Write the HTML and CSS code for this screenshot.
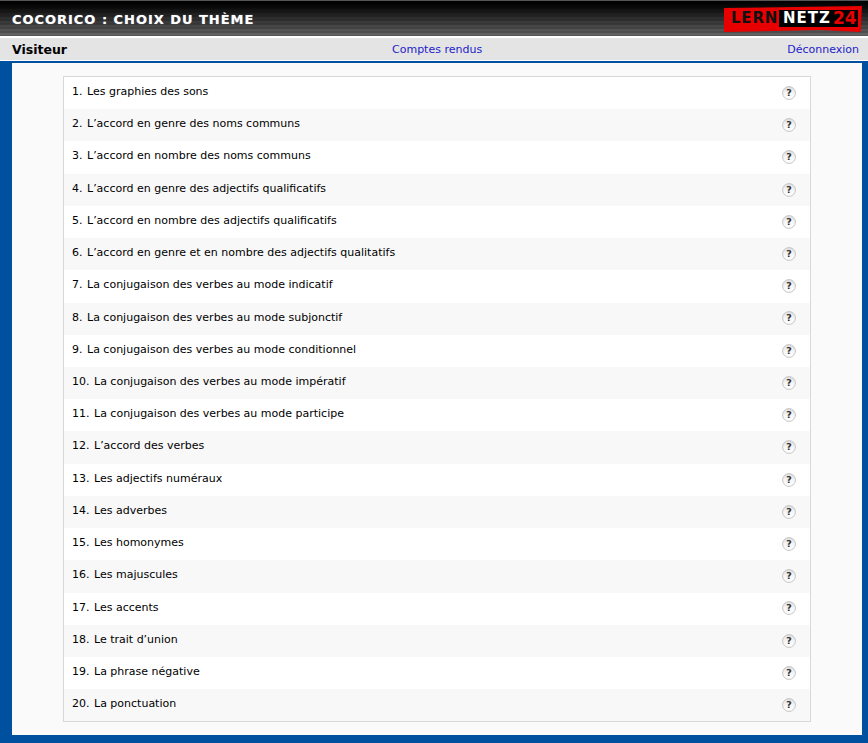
FILE: index.html
```html
<!DOCTYPE html>
<html lang="fr">
<head>
<meta charset="utf-8">
<title>Cocorico : choix du thème</title>
<link rel="stylesheet" href="styles.css">
</head>
<body>
<svg class="defs" width="0" height="0" aria-hidden="true">
  <defs>
    <linearGradient id="qbg" x1="0" y1="0" x2="0" y2="1">
      <stop offset="0" stop-color="#dcdcdc"/>
      <stop offset="0.5" stop-color="#f6f6f6"/>
      <stop offset="1" stop-color="#ffffff"/>
    </linearGradient>
    <symbol id="help" viewBox="0 0 14 14">
      <circle cx="7" cy="7" r="6.4" fill="url(#qbg)" stroke="#c4c4c4" stroke-width="1"/>
      <text x="7" y="10.4" text-anchor="middle" class="qmark">?</text>
    </symbol>
  </defs>
</svg>
<header class="topbar">
  <h1 class="title">COCORICO : CHOIX DU THÈME</h1>
  <div class="logo">
    <span class="logo-lern">LERN</span>
    <div class="logo-box"><span class="logo-netz">NETZ</span><span class="logo-num">24</span></div>
  </div>
</header>
<nav class="menubar">
  <strong class="user">Visiteur</strong>
  <a class="link" href="#">Comptes rendus</a>
  <a class="link link-right" href="#">Déconnexion</a>
</nav>
<main class="content">
  <ul class="themes">
    <li class="theme"><span><span class="num">1.</span> Les graphies des sons</span><svg class="help"><use href="#help"/></svg></li>
    <li class="theme"><span><span class="num">2.</span> L’accord en genre des noms communs</span><svg class="help"><use href="#help"/></svg></li>
    <li class="theme"><span><span class="num">3.</span> L’accord en nombre des noms communs</span><svg class="help"><use href="#help"/></svg></li>
    <li class="theme"><span><span class="num">4.</span> L’accord en genre des adjectifs qualificatifs</span><svg class="help"><use href="#help"/></svg></li>
    <li class="theme"><span><span class="num">5.</span> L’accord en nombre des adjectifs qualificatifs</span><svg class="help"><use href="#help"/></svg></li>
    <li class="theme"><span><span class="num">6.</span> L’accord en genre et en nombre des adjectifs qualitatifs</span><svg class="help"><use href="#help"/></svg></li>
    <li class="theme"><span><span class="num">7.</span> La conjugaison des verbes au mode indicatif</span><svg class="help"><use href="#help"/></svg></li>
    <li class="theme"><span><span class="num">8.</span> La conjugaison des verbes au mode subjonctif</span><svg class="help"><use href="#help"/></svg></li>
    <li class="theme"><span><span class="num">9.</span> La conjugaison des verbes au mode conditionnel</span><svg class="help"><use href="#help"/></svg></li>
    <li class="theme"><span><span class="num">10.</span> La conjugaison des verbes au mode impératif</span><svg class="help"><use href="#help"/></svg></li>
    <li class="theme"><span><span class="num">11.</span> La conjugaison des verbes au mode participe</span><svg class="help"><use href="#help"/></svg></li>
    <li class="theme"><span><span class="num">12.</span> L’accord des verbes</span><svg class="help"><use href="#help"/></svg></li>
    <li class="theme"><span><span class="num">13.</span> Les adjectifs numéraux</span><svg class="help"><use href="#help"/></svg></li>
    <li class="theme"><span><span class="num">14.</span> Les adverbes</span><svg class="help"><use href="#help"/></svg></li>
    <li class="theme"><span><span class="num">15.</span> Les homonymes</span><svg class="help"><use href="#help"/></svg></li>
    <li class="theme"><span><span class="num">16.</span> Les majuscules</span><svg class="help"><use href="#help"/></svg></li>
    <li class="theme"><span><span class="num">17.</span> Les accents</span><svg class="help"><use href="#help"/></svg></li>
    <li class="theme"><span><span class="num">18.</span> Le trait d’union</span><svg class="help"><use href="#help"/></svg></li>
    <li class="theme"><span><span class="num">19.</span> La phrase négative</span><svg class="help"><use href="#help"/></svg></li>
    <li class="theme"><span><span class="num">20.</span> La ponctuation</span><svg class="help"><use href="#help"/></svg></li>
  </ul>
</main>
</body>
</html>
```

FILE: styles.css
```css
* { box-sizing: border-box; }
html, body { margin: 0; padding: 0; }
body {
  width: 868px;
  height: 743px;
  overflow: hidden;
  background: #0050a0;
  font-family: "DejaVu Sans", Verdana, sans-serif;
  font-size: 11px;
  color: #000;
}
.defs { position: absolute; }
.qmark { font: bold 9.5px "DejaVu Sans", sans-serif; fill: #333; }

.topbar {
  height: 36px;
  padding: 1px 6px 0 12px;
  display: flex;
  align-items: center;
  justify-content: space-between;
  background:
    repeating-linear-gradient(to bottom, rgba(0,0,0,0) 0, rgba(0,0,0,0) 2px, rgba(0,0,0,0.14) 2px, rgba(0,0,0,0.14) 4px),
    linear-gradient(to bottom, #000 0, #0a0a0a 6px, #6a6a6a 36px);
  border-top: 1px solid #555;
}
.title {
  margin: 0;
  font-family: "DejaVu Sans", Verdana, sans-serif;
  font-size: 13px;
  font-weight: bold;
  letter-spacing: 0.97px;
  color: #fff;
  white-space: nowrap;
  text-shadow: 0 0 1px rgba(225,240,255,0.55);
}
.logo {
  display: flex;
  align-items: center;
  width: 138px;
  height: 26px;
  padding: 0 4px 2px 7px;
  background: #e80000;
  clip-path: polygon(0 2px, 100% 0, 99% 100%, 70% 24px, 0 100%);
  font-family: "DejaVu Sans", Verdana, sans-serif;
  font-weight: bold;
  font-size: 15px;
}
.logo-lern {
  color: #111;
  width: 48px;
  letter-spacing: 0.8px;
  white-space: nowrap;
}
.logo-box {
  width: 79px;
  height: 17px;
  display: flex;
  align-items: center;
  background: #000;
  white-space: nowrap;
}
.logo-netz { color: #fff; width: 54px; padding-left: 4px; letter-spacing: 1px; }
.logo-num { color: #e80000; font-size: 17px; }

.menubar {
  height: 25px;
  padding: 0 9px 0 12px;
  display: grid;
  grid-template-columns: 380px auto 1fr;
  align-items: center;
  background: #e4e4e4;
  border-top: 2px solid #fff;
  border-bottom: 1px solid #fff;
}
.user { font-size: 12.5px; font-weight: bold; }
.link { color: #2222cc; text-decoration: none; }
.link-right { justify-self: end; }

.content {
  margin: 2px 6px 8px 12px;
  height: 672px;
  padding: 13px 51px 13px 51px;
  background: #fafafa;
}
.themes {
  list-style: none;
  margin: 0;
  padding: 0;
  border: 1px solid #d8d8d8;
  background: #fff;
}
.theme {
  height: 32.22px;
  padding: 0 14px 3.2px 8px;
  display: flex;
  align-items: center;
  justify-content: space-between;
  background: #fff;
}
.theme:nth-child(even) { background: #f8f8f8; }
.num { margin-right: 1px; }
.help { width: 14px; height: 14px; flex: none; margin-top: 2.9px; }
```
